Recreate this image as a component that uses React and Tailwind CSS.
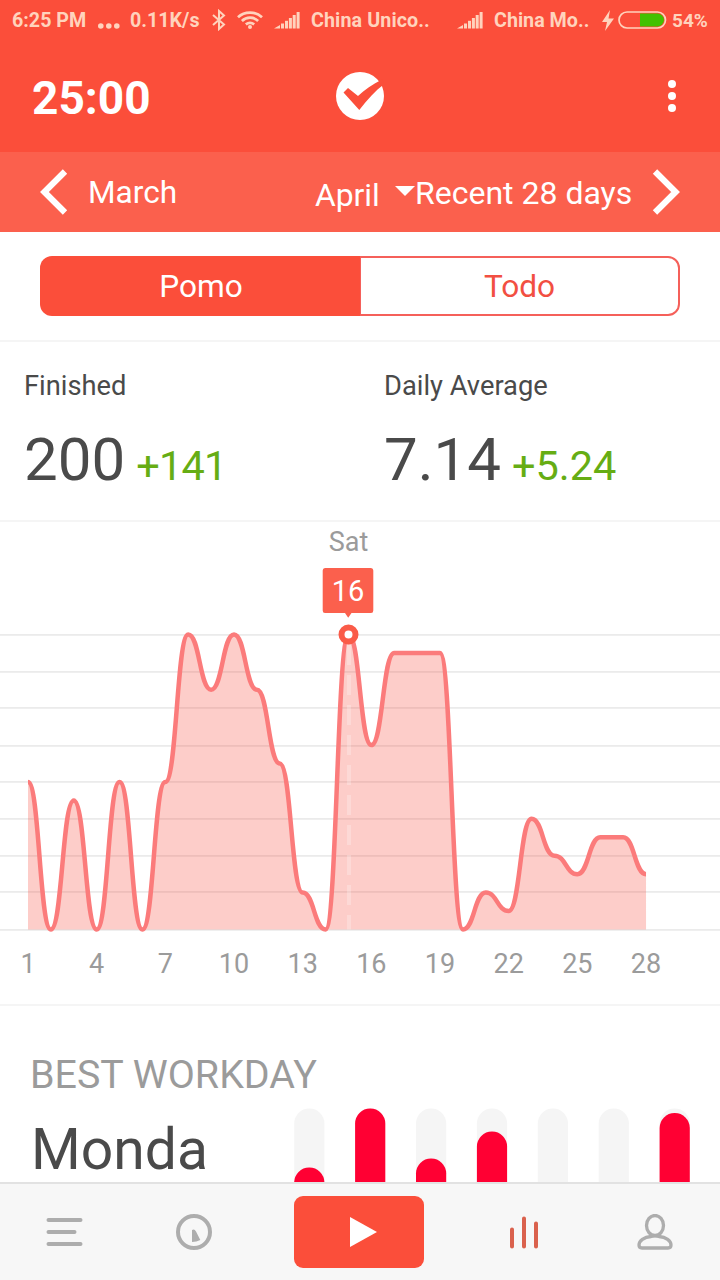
const POMOS = [8, 0, 7, 0, 8, 0, 8, 16, 13, 16, 13, 9, 2, 0, 16, 10, 15, 15, 15, 0, 2, 1, 6, 4, 3, 5, 5, 3];
const LEFT = 28;
const STEP = 22.89;
const BASE = 409.5;
const UNIT = 18.44;

const px = (i) => LEFT + i * STEP;
const py = (v) => BASE - v * UNIT;

const linePath = POMOS.map((v, i) => {
  if (i === 0) return `M${px(0)} ${py(v)}`;
  const mid = (px(i - 1) + px(i)) / 2;
  return `C${mid} ${py(POMOS[i - 1])} ${mid} ${py(v)} ${px(i)} ${py(v)}`;
}).join(" ");
const areaPath = `${linePath} L${px(27)} ${BASE} L${px(0)} ${BASE} Z`;

const GRID_LINES = [114, 151, 187, 225, 261, 298, 335, 371, 409];
const WEEKDAYS = [14, 73, 23, 50, 0, 0, 68.5];

function Signal() {
  return (
    <svg className="shrink-0" width="26" height="18" viewBox="0 0 26 18" fill="currentColor">
      <path d="M0 17.5 L6 14 V17.5Z" />
      <rect x="7" y="12.5" width="3" height="5" />
      <rect x="11" y="9.8" width="3" height="7.7" />
      <rect x="14.9" y="7" width="3" height="10.5" />
      <rect x="18.7" y="4" width="3" height="13.5" />
      <rect x="22.6" y="1" width="3" height="16.5" />
    </svg>
  );
}

function StatusBar() {
  return (
    <div className="flex h-10 items-center text-[19.7px] leading-[38px] font-bold whitespace-nowrap text-[#ffd3bd]">
      <span className="ml-3 w-[86px] pt-0.5">6:25 PM</span>
      <svg className="mt-3 shrink-0" width="22" height="6" viewBox="0 0 22 6" fill="currentColor">
        <circle cx="2.8" cy="3" r="2.8" />
        <circle cx="10.8" cy="3" r="2.8" />
        <circle cx="18.8" cy="3" r="2.8" />
      </svg>
      <span className="ml-[10px] w-[82px] pt-0.5">0.11K/s</span>
      <svg className="shrink-0" width="14" height="22" viewBox="0 0 14 22" fill="none" stroke="currentColor" strokeWidth="2">
        <path d="M1 6 L12 15.5 L7 20 V2 L12 6.5 L1 16" />
      </svg>
      <svg className="ml-[11px] shrink-0" width="26" height="18" viewBox="0 0 26 18" fill="none" stroke="currentColor" strokeWidth="2.7">
        <path d="M1 6.3 C7.5 0 18.5 0 25 6.3" />
        <path d="M4.9 10 C9.5 5.6 16.5 5.6 21.1 10" />
        <path d="M8.8 13.4 C11.5 11.3 14.5 11.3 17.2 13.4" />
        <circle cx="13" cy="16" r="2" fill="currentColor" stroke="none" />
      </svg>
      <span className="ml-[11px] flex"><Signal /></span>
      <span className="ml-[11px] w-[146px] pt-0.5 tracking-[0.1px]">China Unico..</span>
      <Signal />
      <span className="ml-[11px] w-[108px] pt-0.5">China Mo..</span>
      <svg className="shrink-0" width="12" height="21" viewBox="0 0 12 21" fill="currentColor">
        <path d="M8 0 L0 12 H5 L3 21 L12 8.5 H6.5Z" />
      </svg>
      <svg className="ml-1 shrink-0" width="49" height="18" viewBox="0 0 49 18" fill="none">
        <path d="M22 2.5 H39.5 A6.5 6.5 0 0 1 39.5 15.5 H22Z" fill="#43c100" />
        <rect x="1" y="1" width="46.5" height="16" rx="8" stroke="currentColor" strokeWidth="1.7" />
      </svg>
      <span className="ml-[5px] pt-0.5 text-[19px]">54%</span>
    </div>
  );
}

function TitleBar() {
  return (
    <div className="grid h-28 grid-cols-3 items-center px-8 text-white">
      <span className="pt-1 text-[46px] leading-none font-bold">25:00</span>
      <svg className="justify-self-center" width="48" height="48" viewBox="0 0 48 48">
        <circle cx="24" cy="24" r="24" fill="#fff" />
        <path d="M7.5 20.5 L12 16 L22 24 C28.5 17.5 36.5 12.5 46 7.5 L48.5 12 C39.5 18.5 31.5 27.5 23.3 38Z" fill="#fb4e3a" />
      </svg>
      <svg className="mr-3 justify-self-end" width="8" height="32" viewBox="0 0 8 32" fill="#fff">
        <circle cx="4" cy="4" r="4" />
        <circle cx="4" cy="16" r="4" />
        <circle cx="4" cy="28" r="4" />
      </svg>
    </div>
  );
}

function PeriodBar() {
  return (
    <div className="flex h-20 items-center bg-[#fb604d] text-[32px] leading-10 whitespace-nowrap text-white">
      <svg className="mb-px ml-10 shrink-0" width="28" height="46" viewBox="0 0 28 46" fill="none" stroke="#fff" strokeWidth="6.2">
        <path d="M25 2.5 L4.4 23 L25 43.5" />
      </svg>
      <span className="ml-[20px] w-[227px] pt-0.5 text-[31.6px]">March</span>
      <span className="w-[80px] pt-1.5 text-[31.8px]">April</span>
      <svg className="mb-0.5 shrink-0" width="20" height="12" viewBox="0 0 20 12" fill="#fff">
        <path d="M0 1 H20 L10 11Z" />
      </svg>
      <span className="w-[237px] pt-0.5">Recent 28 days</span>
      <svg className="mb-px shrink-0" width="28" height="46" viewBox="0 0 28 46" fill="none" stroke="#fff" strokeWidth="6.2">
        <path d="M3 2.5 L23.6 23 L3 43.5" />
      </svg>
    </div>
  );
}

function Stat({ label, value, children }) {
  return (
    <div className="pl-6">
      <div className="pt-[26px] text-[27.3px] leading-9">{label}</div>
      <div className="mt-[20px] flex items-baseline leading-[72px]">
        <span className="text-[60px]">{value}</span>
        {children}
      </div>
    </div>
  );
}

function Chart() {
  return (
    <svg className="block" width="720" height="482" viewBox="0 2 720 482">
      {GRID_LINES.map((y) => (
        <rect key={y} x="0" y={y} width="720" height="1.8" fill="#ebebeb" />
      ))}
      <path d={areaPath} fill="#f94a3d" fillOpacity="0.28" />
      <path d={`M${px(14) + 0.5} 125 V${BASE}`} stroke="#fff" strokeOpacity="0.25" strokeWidth="4" strokeDasharray="20 10" fill="none" />
      <path d={linePath} fill="none" stroke="#fb7b7b" strokeWidth="4.5" />
      <circle cx="348.5" cy="114.5" r="7" fill="#fff" stroke="#fa5b48" strokeWidth="6" />
      <text x="348.5" y="30.5" textAnchor="middle" fontSize="27" fill="#9b9b9b">Sat</text>
      <path d="M325 48 H371 Q373.3 48 373.3 50.5 V90.5 Q373.3 93 371 93 H351.5 L348.2 97.8 L345 93 H325 Q322.7 93 322.7 90.5 V50.5 Q322.7 48 325 48Z" fill="#fb604d" />
      <text x="348" y="81" textAnchor="middle" fontSize="29" fill="#fff">16</text>
      {[1, 4, 7, 10, 13, 16, 19, 22, 25, 28].map((d) => (
        <text key={d} x={px(d - 1)} y="453" textAnchor="middle" fontSize="27" fill="#9b9b9b">{d}</text>
      ))}
    </svg>
  );
}

function BestWorkday() {
  return (
    <div className="flex h-[178px] justify-between border-t-2 border-[#f5f5f5] px-[30px]">
      <div className="pt-[46px]">
        <div className="text-[39.4px] leading-[46px] whitespace-nowrap text-[#9b9b9b]">BEST WORKDAY</div>
        <div className="mt-[22px] pl-px text-[57px] leading-[60px]">Monda</div>
      </div>
      <svg className="mt-[102px] -ml-8 shrink-0" width="396" height="74" viewBox="0 0 396 74">
        {WEEKDAYS.map((h, i) => (
          <g key={i}>
            <rect x={i * 60.9 + 0.2} y="0.5" width="30.2" height="110" rx="15" fill="#f5f5f5" />
            {h > 0 && <rect x={i * 60.9 + 0.2} y={73.5 - h} width="30.2" height="110" rx="15" fill="#ff0033" />}
          </g>
        ))}
      </svg>
    </div>
  );
}

function BottomNav() {
  return (
    <nav className="grid h-[98px] grid-cols-[129px_130px_200px_130px_131px] items-center justify-items-center border-t-2 border-[#e2e2e2] bg-[#f7f7f7]">
      <svg width="37" height="30" viewBox="0 0 37 30" fill="none" stroke="#adadad" strokeWidth="4" strokeLinecap="round">
        <path d="M2.5 3 H34.5 M2.5 15 H28.5 M2.5 27 H34.5" />
      </svg>
      <svg width="36" height="36" viewBox="0 0 36 36">
        <circle cx="18" cy="18" r="16" fill="none" stroke="#adadad" strokeWidth="4" />
        <path d="M16 16 Q18.5 14.5 20 17.5 L24.3 26 Q20.5 28 16 28Z" fill="#adadad" />
      </svg>
      <button className="flex h-[72px] w-[130px] items-center justify-center rounded-[9px] bg-[#fb4e3a] pl-2">
        <svg width="27" height="30" viewBox="0 0 27 30" fill="#fff">
          <path d="M0 0 L27 15 L0 30Z" />
        </svg>
      </button>
      <svg width="30" height="33" viewBox="0 0 30 33" fill="none" stroke="#da614d" strokeWidth="4" strokeLinecap="round">
        <path d="M3 13.5 V30.5 M15 2.5 V30.5 M27 7.5 V30.5" />
      </svg>
      <svg width="36" height="36" viewBox="0 0 36 36" fill="none" stroke="#adadad" strokeWidth="3.3" strokeLinejoin="round">
        <ellipse cx="18" cy="11.5" rx="8.5" ry="10" />
        <path d="M14 22.5 C7 23 2 27 2 31 Q2 34 5 34 H31 Q34 34 34 31 C34 27 29 23 22 22.5 Q18 21 14 22.5Z" />
      </svg>
    </nav>
  );
}

export default function App() {
  return (
    <div className="h-[1280px] w-[720px] overflow-hidden bg-white font-[Roboto,sans-serif] text-[#4a4a4a]">
      <header className="bg-[#fb4e3a]">
        <StatusBar />
        <TitleBar />
        <PeriodBar />
      </header>
      <div className="h-[108px] px-10 pt-6">
        <div className="grid h-[60px] grid-cols-2 text-center text-[31.6px]">
          <div className="h-[60px] rounded-l-[12px] bg-[#fb4e3a] pt-px pl-0.5 leading-[60px] text-white">Pomo</div>
          <div className="h-[60px] rounded-r-[12px] border-2 border-l border-[#f5605a] leading-[58px] text-[#f24f42]">Todo</div>
        </div>
      </div>
      <section className="grid h-[182px] grid-cols-2 border-y-2 border-[#f5f5f5]">
        <Stat label="Finished" value="200">
          <span className="ml-[11px] text-[41.5px] tracking-[-0.8px] text-[#66ad14]">+141</span>
        </Stat>
        <Stat label="Daily Average" value="7.14">
          <span className="ml-[11px] text-[41.5px] text-[#66ad14]">+5.24</span>
        </Stat>
      </section>
      <Chart />
      <BestWorkday />
      <BottomNav />
    </div>
  );
}
